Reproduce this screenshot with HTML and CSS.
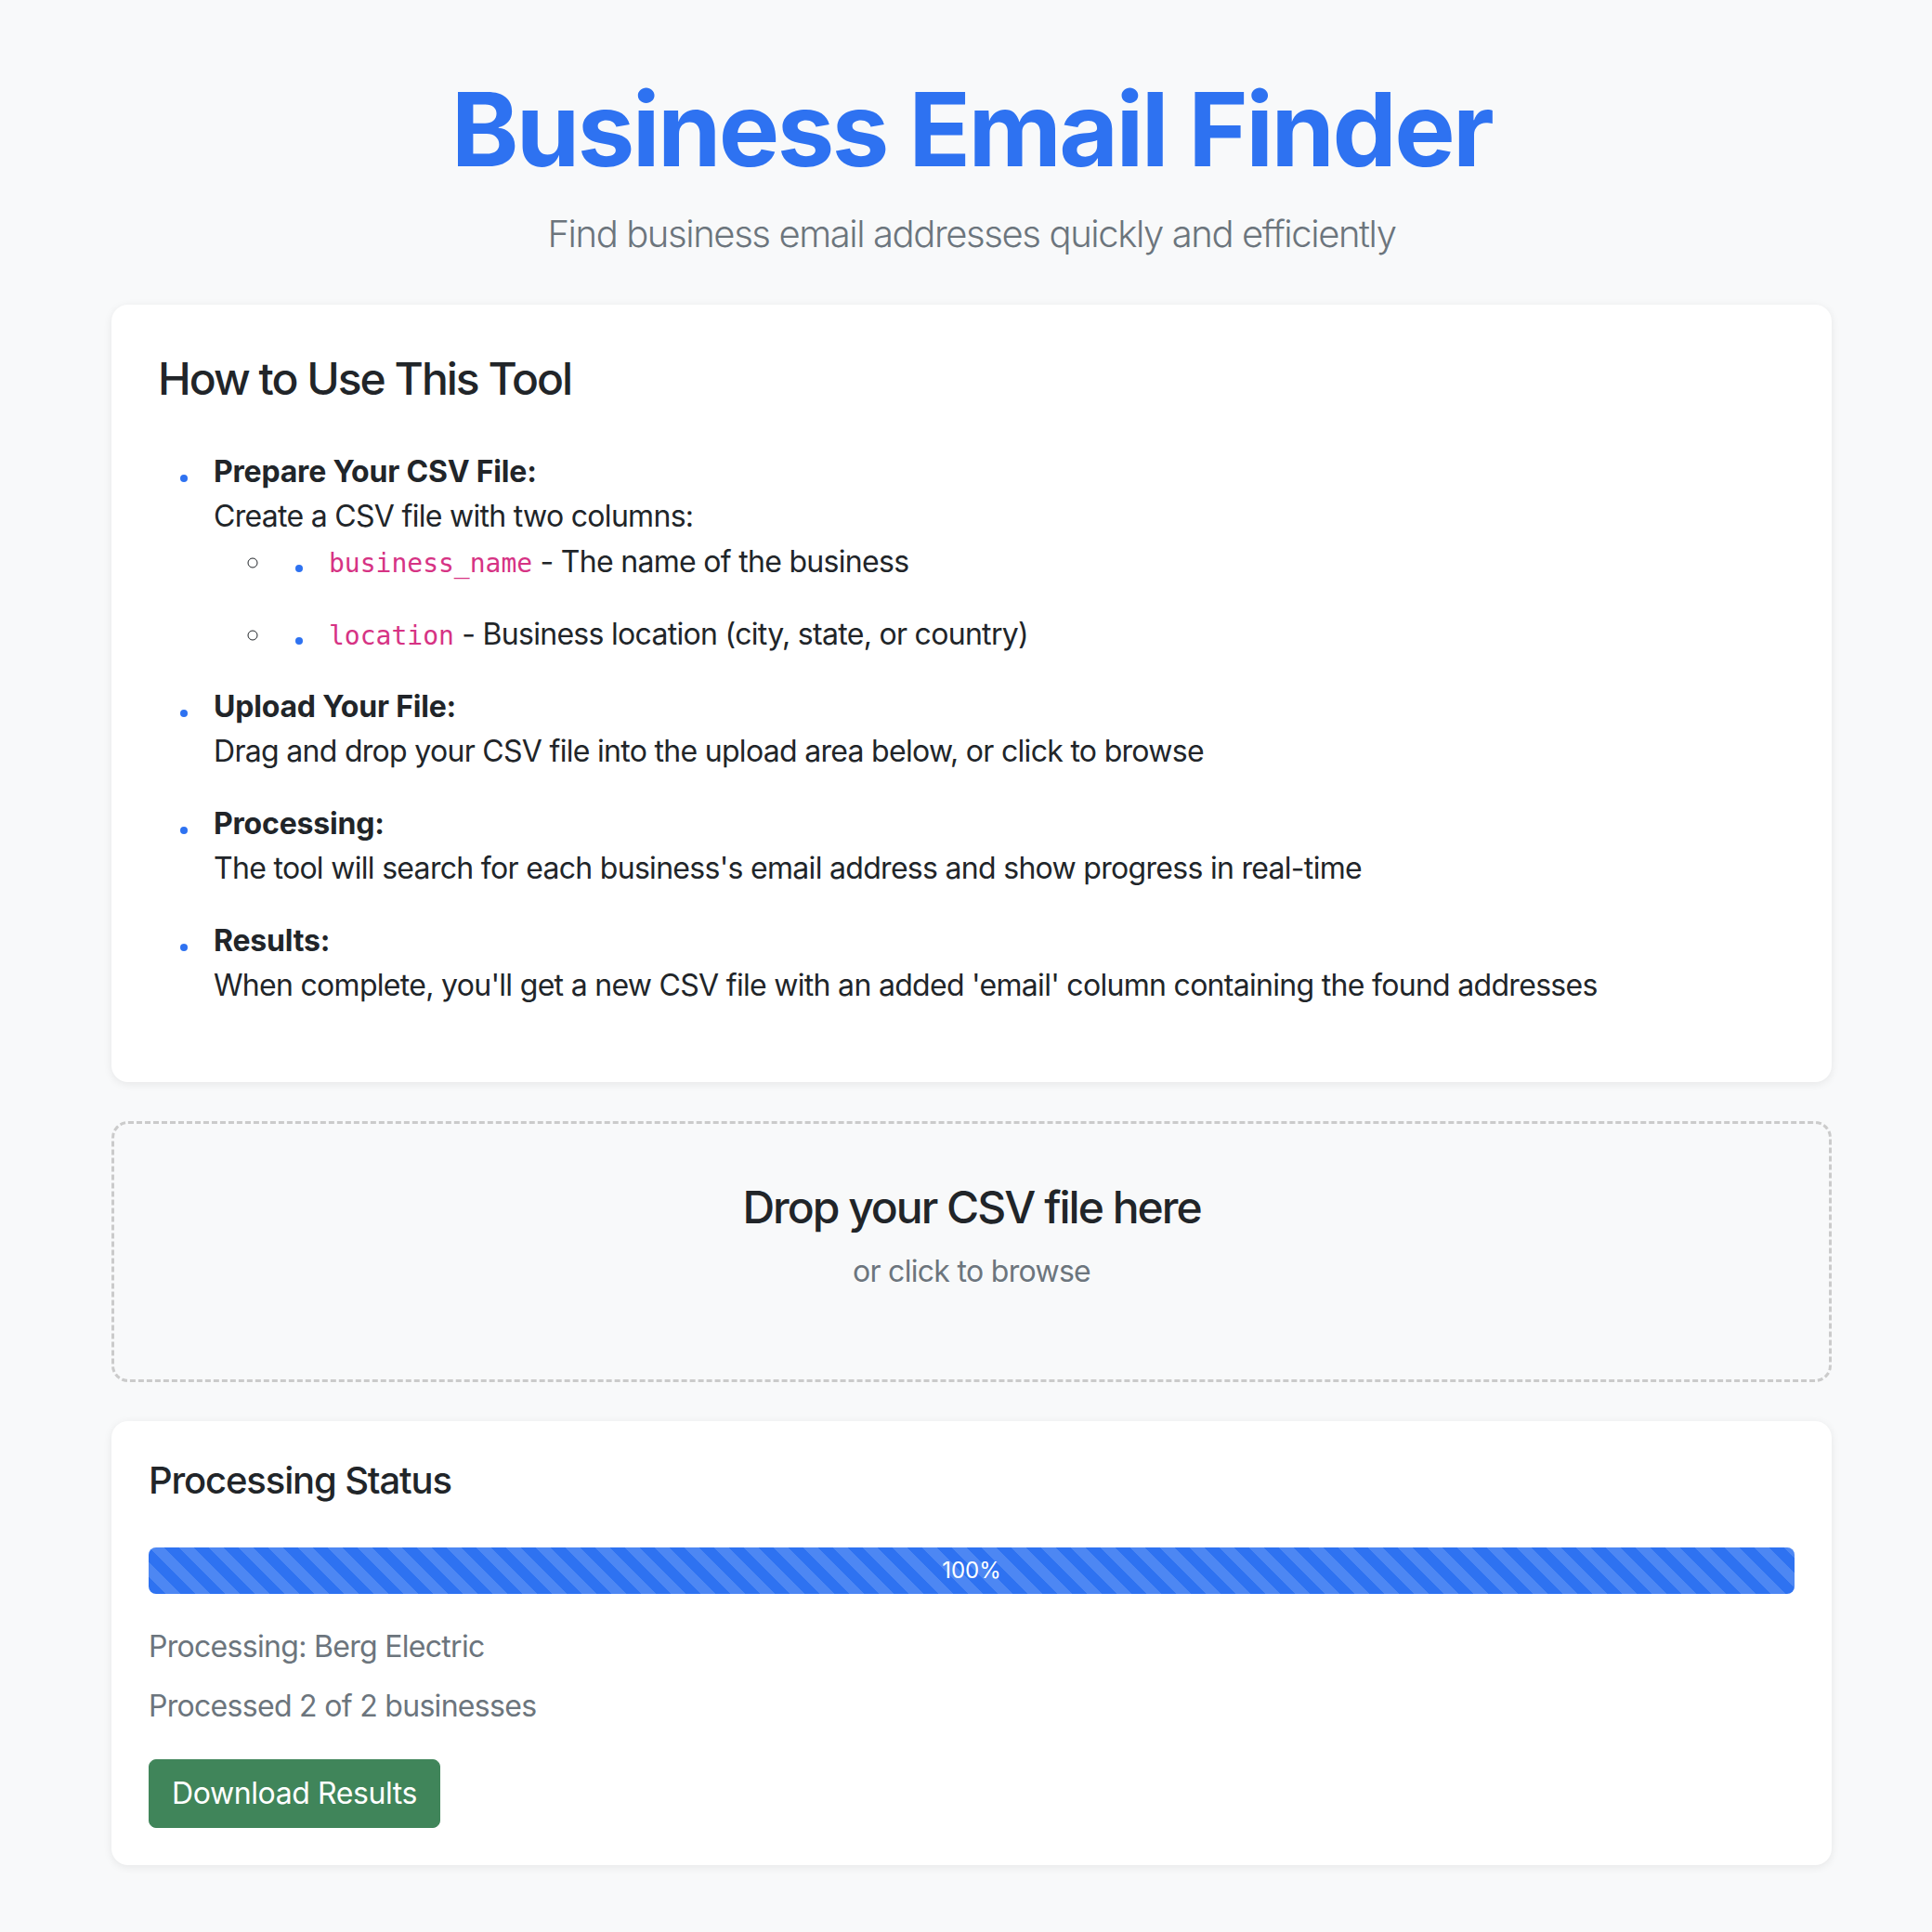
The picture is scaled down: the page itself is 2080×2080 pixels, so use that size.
FILE: index.html
```html
<!DOCTYPE html>
<html lang="en">
<head>
<meta charset="utf-8">
<title>Business Email Finder</title>
<link rel="stylesheet" href="styles.css">
</head>
<body>
<div class="container">
  <header class="page-header">
    <h1 class="title">Business Email Finder</h1>
    <p class="lead">Find business email addresses quickly and efficiently</p>
  </header>

  <section class="card instructions">
    <h2 class="card-title">How to Use This Tool</h2>
    <ul class="steps">
      <li>
        <strong>Prepare Your CSV File:</strong>
        <span class="desc">Create a CSV file with two columns:</span>
        <ul class="sub">
          <li><code>business_name</code> - The name of the business</li>
          <li><code>location</code> - Business location (city, state, or country)</li>
        </ul>
      </li>
      <li>
        <strong>Upload Your File:</strong>
        <span class="desc">Drag and drop your CSV file into the upload area below, or click to browse</span>
      </li>
      <li>
        <strong>Processing:</strong>
        <span class="desc">The tool will search for each business's email address and show progress in real-time</span>
      </li>
      <li>
        <strong>Results:</strong>
        <span class="desc">When complete, you'll get a new CSV file with an added 'email' column containing the found addresses</span>
      </li>
    </ul>
  </section>

  <div class="dropzone">
    <h3 class="drop-title">Drop your CSV file here</h3>
    <p class="drop-sub">or click to browse</p>
  </div>

  <section class="card status">
    <h5 class="status-title">Processing Status</h5>
    <div class="progress">
      <div class="progress-bar" style="width: 100%">100%</div>
    </div>
    <p class="muted current">Processing: Berg Electric</p>
    <p class="muted count">Processed 2 of 2 businesses</p>
    <button class="btn-download" type="button">Download Results</button>
  </section>
</div>
</body>
</html>
```

FILE: styles.css
```css
* { box-sizing: border-box; }

html, body {
  margin: 0;
  padding: 0;
  background: #f8f9fa;
}

body {
  font-family: Inter, "Noto Sans", "Liberation Sans", sans-serif;
  font-size: 32px;
  line-height: 48px;
  letter-spacing: -0.7px;
  color: #212529;
}

.container {
  width: 1852px;
  margin-left: 120px;
  padding-top: 72px;
  padding-bottom: 60px;
}

.page-header {
  text-align: center;
  margin-bottom: 46px;
}

.title {
  margin: 0 0 16px;
  font-size: 110px;
  line-height: 134px;
  font-weight: 700;
  color: #2e72f1;
  letter-spacing: -2.6px;
}

.lead {
  margin: 0;
  font-size: 40px;
  line-height: 60px;
  font-weight: 300;
  letter-spacing: -1.4px;
  color: #6c757d;
}

.card {
  background: #fff;
  border-radius: 18px;
  box-shadow: 0 2px 10px rgba(0, 0, 0, 0.08);
}

.instructions {
  padding: 50px;
}

.card-title {
  margin: 0 0 46px;
  font-size: 48px;
  line-height: 60px;
  font-weight: 500;
  letter-spacing: -2px;
}

.steps {
  list-style: none;
  margin: 0;
  padding: 0;
}

.steps li {
  position: relative;
  padding-left: 60px;
  margin-bottom: 30px;
}

.steps li::before {
  content: "";
  position: absolute;
  left: 24px;
  top: 27px;
  width: 8px;
  height: 8px;
  border-radius: 50%;
  background: #2e72f1;
}

.steps strong {
  display: block;
  font-weight: 700;
  letter-spacing: -0.2px;
}

.desc { display: block; }

.sub {
  list-style: circle;
  margin: 0;
  padding: 1px 0 0 64px;
}

code {
  font-family: "DejaVu Sans Mono", "Liberation Mono", monospace;
  font-size: 28px;
  line-height: 1;
  letter-spacing: 0;
  color: #d63384;
}

.dropzone {
  margin-top: 42px;
  border: 3px dashed #cbcbcb;
  border-radius: 18px;
  padding: 61px 40px 62px;
  text-align: center;
}

.drop-title {
  margin: 0 0 16px;
  font-size: 48px;
  line-height: 58px;
  font-weight: 500;
  letter-spacing: -2px;
}

.drop-sub {
  margin: 0 0 30px;
  color: #6c757d;
}

.status {
  margin-top: 42px;
  padding: 40px;
}

.status-title {
  margin: 0 0 48px;
  font-size: 40px;
  line-height: 48px;
  font-weight: 500;
  letter-spacing: -1.15px;
}

.progress {
  height: 50px;
  border-radius: 8px;
  background: #e9ecef;
  overflow: hidden;
  display: flex;
}

.progress-bar {
  display: flex;
  align-items: center;
  justify-content: center;
  color: #fff;
  font-size: 24px;
  letter-spacing: 0;
  background-color: #2e72f1;
  background-image: linear-gradient(45deg,
    rgba(255,255,255,.15) 25%, transparent 25%,
    transparent 50%, rgba(255,255,255,.15) 50%,
    rgba(255,255,255,.15) 75%, transparent 75%, transparent);
  background-size: 32px 32px;
}

.muted {
  color: #6c757d;
  margin: 0 0 16px;
}

.current { margin-top: 33px; }

.btn-download {
  margin-top: 17px;
  display: inline-block;
  font-family: inherit;
  font-size: 32px;
  line-height: 48px;
  letter-spacing: -0.4px;
  color: #fff;
  background: #40855a;
  border: 1px solid #40855a;
  border-radius: 8px;
  padding: 12px 24px;
}
```
